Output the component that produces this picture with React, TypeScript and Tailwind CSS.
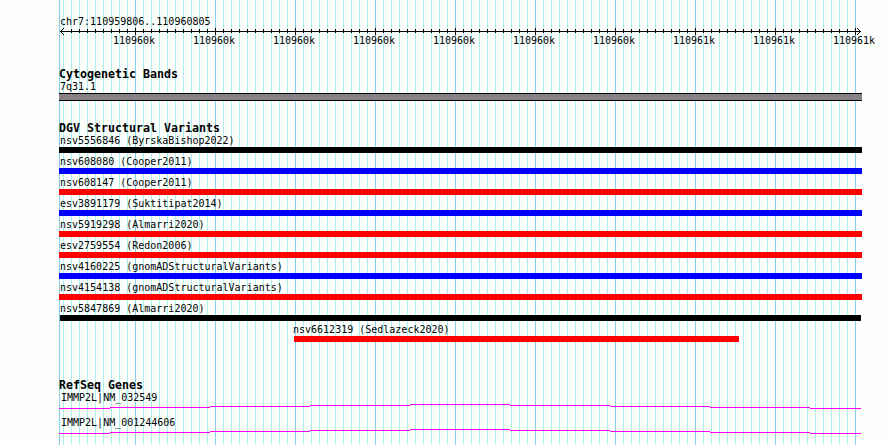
import React from 'react';

const small = "font-['DejaVu_Sans_Mono','Liberation_Mono',monospace] text-[10px] leading-[12px] whitespace-pre";
const bold = "font-['DejaVu_Sans_Mono','Liberation_Mono',monospace] font-bold text-[11.63px] leading-[13px] whitespace-pre";

const minorLines = Array.from({ length: 100 }, (_, i) => 63 + i * 8).filter((x) => x <= 855);
const majorLines = [135, 215, 295, 375, 455, 535, 615, 695, 775, 855];

const variants = [
  { label: 'nsv5556846 (ByrskaBishop2022)', bar: 'bg-black ml-[59px] w-[803px]' },
  { label: 'nsv608080 (Cooper2011)', bar: 'bg-[#0000ff] ml-[59px] w-[803px]' },
  { label: 'nsv608147 (Cooper2011)', bar: 'bg-[#ff0000] ml-[59px] w-[803px]' },
  { label: 'esv3891179 (Suktitipat2014)', bar: 'bg-[#0000ff] ml-[59px] w-[803px]' },
  { label: 'nsv5919298 (Almarri2020)', bar: 'bg-[#ff0000] ml-[59px] w-[803px]' },
  { label: 'esv2759554 (Redon2006)', bar: 'bg-[#ff0000] ml-[59px] w-[803px]' },
  { label: 'nsv4160225 (gnomADStructuralVariants)', bar: 'bg-[#0000ff] ml-[59px] w-[803px]' },
  { label: 'nsv4154138 (gnomADStructuralVariants)', bar: 'bg-[#ff0000] ml-[59px] w-[803px]' },
  { label: 'nsv5847869 (Almarri2020)', bar: 'bg-black ml-[60px] w-[801px]' },
  { label: 'nsv6612319 (Sedlazeck2020)', bar: 'bg-[#ff0000] ml-[294px] w-[445px]', indent: true },
];

function Grid() {
  return (
    <svg className="absolute inset-0" width="890" height="445" shapeRendering="crispEdges">
      {minorLines.map((x) => (
        <rect key={x} x={x} y="0" width="1" height="445" fill="#afeeee" />
      ))}
      <rect x="59" y="0" width="1" height="445" fill="#87ceeb" />
      {majorLines.map((x) => (
        <rect key={x} x={x} y="0" width="1" height="445" fill="#87ceeb" />
      ))}
    </svg>
  );
}

function Axis() {
  return (
    <svg className="block" width="890" height="9" shapeRendering="crispEdges">
      <rect x="60" y="4" width="801" height="1" />
      {minorLines.filter((x) => x > 63).map((x) => (
        <rect key={x} x={x} y="2" width="1" height="4" />
      ))}
      {majorLines.map((x) => (
        <rect key={x} x={x} y="1" width="1" height="7" />
      ))}
      {[1, 2, 3].map((d) => (
        <g key={d}>
          <rect x={60 + d} y={4 - d} width="1" height="1" />
          <rect x={60 + d} y={4 + d} width="1" height="1" />
          <rect x={860 - d} y={4 - d} width="1" height="1" />
          <rect x={860 - d} y={4 + d} width="1" height="1" />
        </g>
      ))}
    </svg>
  );
}

const hat = [
  [59, 110, 4],
  [110, 210, 3],
  [210, 310, 2],
  [310, 410, 1],
  [410, 510, 0],
  [510, 610, 1],
  [610, 710, 2],
  [710, 810, 3],
  [810, 861, 4],
];

function Gene({ label }: { label: string }) {
  return (
    <div className="h-[25px]">
      <div className={`${small} h-[12px] pt-px pl-[61px]`}>{label}</div>
      <svg className="block" width="890" height="6" shapeRendering="crispEdges">
        {hat.map(([a, b, y]) => (
          <rect key={a} x={a} y={y + 1} width={b - a} height="1" fill="#ff00ff" />
        ))}
      </svg>
    </div>
  );
}

export default function App() {
  return (
    <div className="relative h-[445px] w-[890px] overflow-hidden bg-[#fdfffc] text-black">
      <Grid />
      <div className="relative flex flex-col pt-[15px]">
        <div className={`${small} h-[12px] pt-px pl-[60px]`}>chr7:110959806..110960805</div>
        <Axis />
        <div className="-mt-px flex h-[34px] pl-[94px]">
          {majorLines.map((x) => (
            <div key={x} className={`${small} w-[80px] shrink-0 text-center`}>
              {x < 640 ? '110960k' : '110961k'}
            </div>
          ))}
        </div>
        <div className={`${bold} h-[12px] -mt-px pl-[59px]`}>Cytogenetic Bands</div>
        <div className={`${small} h-[13px] pt-px pl-[60px]`}>7q31.1</div>
        <div className="ml-[59px] h-[8px] w-[803px] border-y border-black bg-[#878286]" />
        <div className={`${bold} mt-[21px] h-[12px] pl-[59px]`}>DGV Structural Variants</div>
        {variants.map((v) => (
          <div key={v.label} className="h-[21px]">
            <div className={`${small} h-[13px] pt-px ${v.indent ? 'pl-[293px]' : 'pl-[60px]'}`}>{v.label}</div>
            <div className={`h-[6px] ${v.bar}`} />
          </div>
        ))}
        <div className={`${bold} mt-[35px] h-[12px] pl-[59px]`}>RefSeq Genes</div>
        <Gene label="IMMP2L|NM_032549" />
        <Gene label="IMMP2L|NM_001244606" />
      </div>
    </div>
  );
}
